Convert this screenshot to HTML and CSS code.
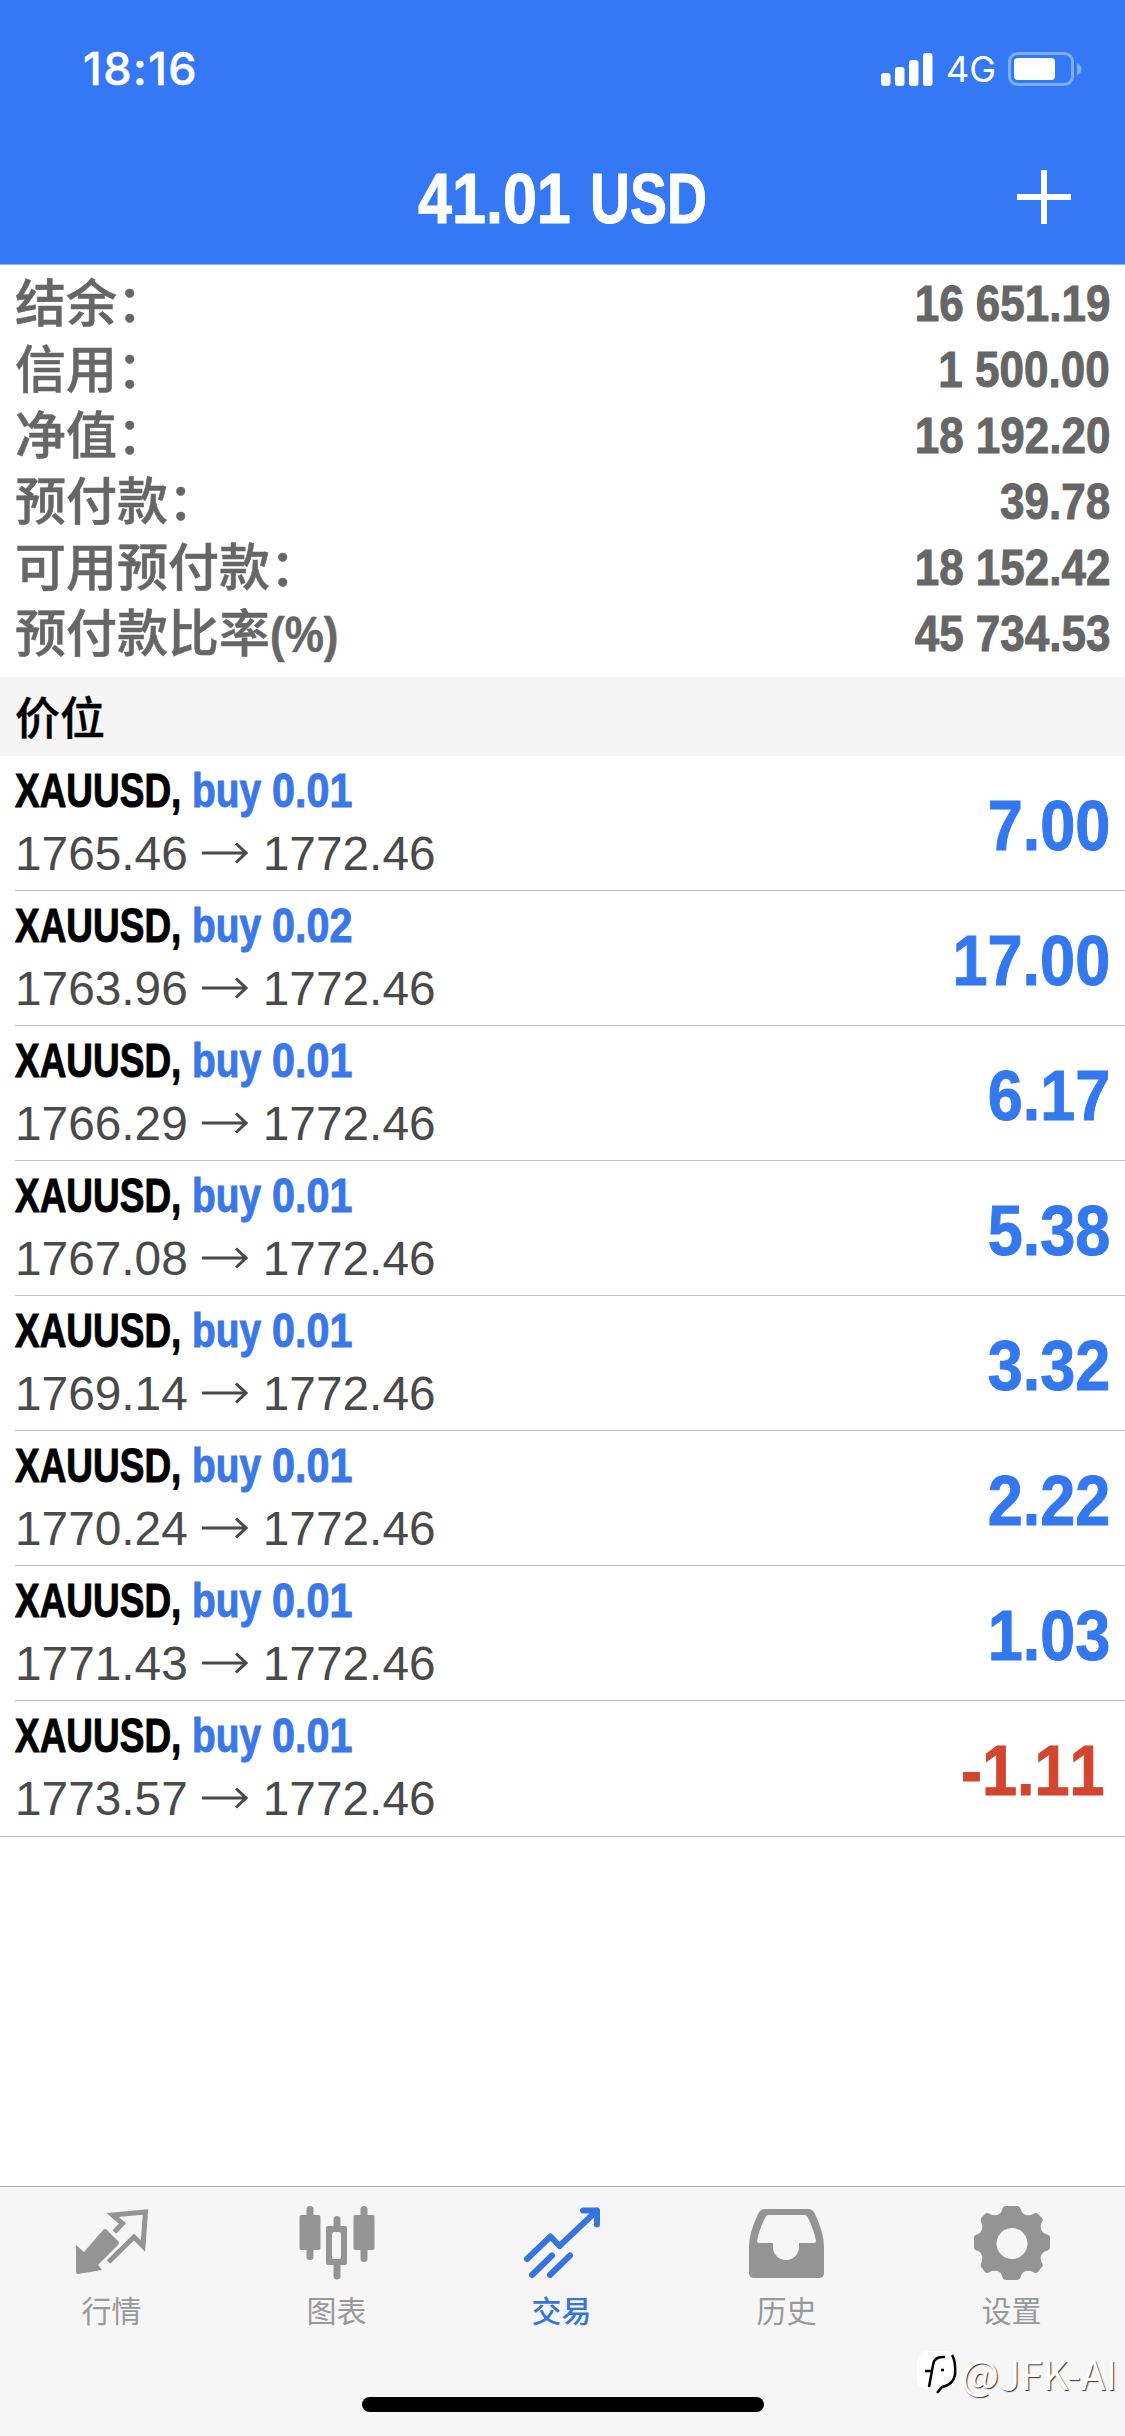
FILE: index.html
```html
<!DOCTYPE html>
<html lang="zh-CN">
<head>
<meta charset="utf-8">
<title>交易</title>
<link rel="stylesheet" href="styles.css">
</head>
<body>
<div class="app">
  <header class="header">
    <div class="status">
      <span class="clock">18:16</span>
      <div class="status-icons">
        <svg class="signal" viewBox="0 0 52 33"><rect x="0" y="20" width="9.500" height="13" rx="3"/><rect x="14" y="14" width="9.500" height="19" rx="3"/><rect x="28" y="7" width="9.500" height="26" rx="3"/><rect x="42" y="0" width="9.500" height="33" rx="3"/></svg>
        <span class="network">4G</span>
        <svg class="battery" viewBox="0 0 74 34"><rect class="shell" x="1.500" y="1.500" width="63" height="31" rx="8"/><rect x="6" y="6" width="41" height="22" rx="4"/><path class="nub" d="M69 11q4.500 1.500 4.500 6t-4.500 6z"/></svg>
      </div>
    </div>
    <div class="nav">
      <h1 class="nav-title"><span class="nav-amount">41.01</span><span class="nav-currency">USD</span></h1>
      <svg class="plus" viewBox="0 0 54 54"><path d="M27 0v54M0 27h54"/></svg>
    </div>
  </header>
  <section class="summary">
    <div class="sum-row"><span>结余：</span><b class="num">16 651.19</b></div>
    <div class="sum-row"><span>信用：</span><b class="num">1 500.00</b></div>
    <div class="sum-row"><span>净值：</span><b class="num">18 192.20</b></div>
    <div class="sum-row"><span>预付款：</span><b class="num">39.78</b></div>
    <div class="sum-row"><span>可用预付款：</span><b class="num">18 152.42</b></div>
    <div class="sum-row"><span>预付款比率<b class="pct">(%)</b></span><b class="num">45 734.53</b></div>
  </section>
  <h2 class="section-title">价位</h2>
  <ul class="positions">
    <li class="position"><div class="info"><div class="deal"><b class="symbol">XAUUSD,</b><b class="side">buy</b><b class="lots">0.01</b></div><div class="prices"><span>1765.46</span><svg class="arrow" viewBox="0 0 46 22"><path d="M0 11h44M34 1.500l10 9.500-10 9.500"/></svg><span>1772.46</span></div></div><b class="profit">7.00</b></li>
    <li class="position"><div class="info"><div class="deal"><b class="symbol">XAUUSD,</b><b class="side">buy</b><b class="lots">0.02</b></div><div class="prices"><span>1763.96</span><svg class="arrow" viewBox="0 0 46 22"><path d="M0 11h44M34 1.500l10 9.500-10 9.500"/></svg><span>1772.46</span></div></div><b class="profit">17.00</b></li>
    <li class="position"><div class="info"><div class="deal"><b class="symbol">XAUUSD,</b><b class="side">buy</b><b class="lots">0.01</b></div><div class="prices"><span>1766.29</span><svg class="arrow" viewBox="0 0 46 22"><path d="M0 11h44M34 1.500l10 9.500-10 9.500"/></svg><span>1772.46</span></div></div><b class="profit">6.17</b></li>
    <li class="position"><div class="info"><div class="deal"><b class="symbol">XAUUSD,</b><b class="side">buy</b><b class="lots">0.01</b></div><div class="prices"><span>1767.08</span><svg class="arrow" viewBox="0 0 46 22"><path d="M0 11h44M34 1.500l10 9.500-10 9.500"/></svg><span>1772.46</span></div></div><b class="profit">5.38</b></li>
    <li class="position"><div class="info"><div class="deal"><b class="symbol">XAUUSD,</b><b class="side">buy</b><b class="lots">0.01</b></div><div class="prices"><span>1769.14</span><svg class="arrow" viewBox="0 0 46 22"><path d="M0 11h44M34 1.500l10 9.500-10 9.500"/></svg><span>1772.46</span></div></div><b class="profit">3.32</b></li>
    <li class="position"><div class="info"><div class="deal"><b class="symbol">XAUUSD,</b><b class="side">buy</b><b class="lots">0.01</b></div><div class="prices"><span>1770.24</span><svg class="arrow" viewBox="0 0 46 22"><path d="M0 11h44M34 1.500l10 9.500-10 9.500"/></svg><span>1772.46</span></div></div><b class="profit">2.22</b></li>
    <li class="position"><div class="info"><div class="deal"><b class="symbol">XAUUSD,</b><b class="side">buy</b><b class="lots">0.01</b></div><div class="prices"><span>1771.43</span><svg class="arrow" viewBox="0 0 46 22"><path d="M0 11h44M34 1.500l10 9.500-10 9.500"/></svg><span>1772.46</span></div></div><b class="profit">1.03</b></li>
    <li class="position"><div class="info"><div class="deal"><b class="symbol">XAUUSD,</b><b class="side">buy</b><b class="lots">0.01</b></div><div class="prices"><span>1773.57</span><svg class="arrow" viewBox="0 0 46 22"><path d="M0 11h44M34 1.500l10 9.500-10 9.500"/></svg><span>1772.46</span></div></div><b class="profit loss">-1.11</b></li>
  </ul>
  <footer class="tabbar">
    <nav class="tabs">
      <a class="tab"><svg class="tab-icon" viewBox="0 0 76 76"><path class="fill" d="M2 40l8 7 19-22q2-2 4 0l11 11q2 2 0 4L24 60l4 5-24 4q-2 0-2-2z"/><path class="line" d="M40.500 27l8-8.500-10-8.500 33-3-2.500 34-9-9L34.500 57"/></svg><span>行情</span></a>
      <a class="tab"><svg class="tab-icon" viewBox="0 0 76 76"><rect class="fill" x="0.500" y="10" width="21" height="35" rx="2"/><rect class="fill" x="7.500" y="1" width="7" height="54" rx="3.500"/><rect class="fill" x="54.500" y="10" width="21" height="35" rx="2"/><rect class="fill" x="61.500" y="1" width="7" height="56" rx="3.500"/><path class="fill" fill-rule="evenodd" d="M34.500 14.500a3.500 3.500 0 0 1 7 0V21H46q2 0 2 2v35q0 2-2 2h-4.500v11a3.500 3.500 0 0 1-7 0V60H29q-2 0-2-2V23q0-2 2-2h5.500zM35 27q-2 0-2 2v23q0 2 2 2h5q2 0 2-2V29q0-2-2-2z"/></svg><span>图表</span></a>
      <a class="tab active"><svg class="tab-icon" viewBox="0 0 76 76"><path class="trend" d="M3 54L26.500 31.500 35.500 41 73 5.500M59 5.500h14v14"/><path class="trend" d="M8 70l20-19.500M26 70l20-19.500"/></svg><span>交易</span></a>
      <a class="tab"><svg class="tab-icon" viewBox="0 0 76 76"><path class="fill" fill-rule="evenodd" d="M17 4h42q5 0 7 5 9 19 9 33v26q0 5-5 5H5q-5 0-5-5V42Q0 28 9 9q2-5 8-5zM20 10q-3 0-4 3Q10 25 8 36q0 2 2 2h14v4a13 13 0 0 0 26 0v-4h15q2 0 2-2-2-11-8-23-1-3-4-3z"/></svg><span>历史</span></a>
      <a class="tab"><svg class="tab-icon" viewBox="0 0 76 76"><path class="fill" fill-rule="evenodd" d="M32 1h11q3 0 4 4 1 4 5 5 4 1 7-1 3-2 5 0l3 3q3 2 1 5-2 3-1 7 1 4 5 5 4 1 4 4v9q0 3-4 4-4 1-5 5-1 4 1 7 2 3-1 5l-3 4q-2 2-5 0-3-2-7-1-4 1-5 5-1 4-4 4H32q-3 0-4-4-1-4-5-5-4-1-7 1-3 2-5 0l-3-4q-2-2-1-5 2-3 1-7-1-4-4-5-4-1-4-4v-9q0-3 4-4 3-1 4-5 1-4-1-7-1-3 1-5l3-3q2-2 5 0 3 2 7 1 4-1 5-5 1-4 4-4zM38 23a15.500 15.500 0 1 0 .01 0z"/></svg><span>设置</span></a>
    </nav>
    <div class="home"></div>
    <div class="watermark"><svg viewBox="0 0 42 46"><path class="bubble" d="M12 1h16q12 0 12 12v14q0 9-10 12H10Q1 38 1 28V12Q2 1 12 1z"/><path class="ink" d="M29 7q-11-1-12 8l-4 22M9 21h7M25 20h3"/><path class="ink" d="M36 5q4 6 3 20-2 10-13 12l-5 6"/></svg><span>@JFK-AI</span></div>
  </footer>
</div>
</body>
</html>
```
FILE: styles.css
```css
* { box-sizing: border-box; margin: 0; padding: 0; }
body { width: 1125px; background: #fff; }
svg { display: block; flex: none; }

.app {
  display: flex;
  flex-direction: column;
  width: 1125px;
  height: 2436px;
  overflow: hidden;
  font-family: "Liberation Sans", "Noto Sans CJK SC", sans-serif;
  font-kerning: none;
}

.header { height: 265px; background: #3478f5; border-bottom: 1px solid #8db4fa; color: #fff; }
.status { display: flex; justify-content: space-between; align-items: center; height: 138px; padding: 0 43px 0 83px; }
.clock { font: 500 45px/50px Inter, sans-serif; letter-spacing: 1.5px; -webkit-text-stroke: .5px; }
.status-icons { display: flex; align-items: center; }
.signal { width: 52px; height: 33px; fill: #fff; }
.network { width: 75px; padding-left: 13px; font: 400 36px/40px Inter, sans-serif; }
.battery { width: 74px; height: 34px; fill: #fff; }
.battery .shell { fill: none; stroke: #7baefb; stroke-width: 3; }
.battery .nub { fill: #7baefb; }
.nav { display: grid; grid-template-columns: 1fr auto 1fr; align-items: center; height: 118px; padding-right: 54px; padding-left: 54px; }
.nav-title { display: flex; grid-column: 2; width: 290px; padding-top: 4px; font-size: 71px; line-height: 80px; white-space: nowrap; -webkit-text-stroke: 1px; }
.nav-amount { width: 172px; transform: scaleX(.86); transform-origin: left; }
.nav-currency { width: 118px; transform: scaleX(.78); transform-origin: left; }
.plus { justify-self: end; width: 54px; height: 54px; stroke: #fff; stroke-width: 6; }

.summary { height: 412px; padding: 6px 15px 0; color: #666; }
.sum-row { display: flex; justify-content: space-between; align-items: center; height: 66px; font-size: 51px; font-weight: 500; line-height: 66px; white-space: nowrap; }
.sum-row > span { margin-top: 2px; -webkit-text-stroke: .5px; }
.num { font-size: 50px; transform: scaleX(.88); transform-origin: right; -webkit-text-stroke: 1px; }
.pct { display: inline-block; font-size: 50px; transform: scaleX(.88); transform-origin: left; }

.section-title { height: 79px; padding-left: 15px; background: #f5f5f5; color: #000; font: 500 45px/77px "Noto Sans CJK SC", sans-serif; -webkit-text-stroke: .4px; }

.positions { flex: 1; list-style: none; }
.position { display: flex; justify-content: space-between; height: 135px; margin-left: 15px; padding-right: 15px; border-bottom: 1px solid #bdbdbd; }
.position:last-child { height: 136px; margin-left: 0; padding-left: 15px; }
.info { padding-top: 7px; }
.deal { display: flex; font-size: 48px; line-height: 56px; white-space: nowrap; -webkit-text-stroke: 1px; }
.symbol { width: 177px; transform: scaleX(.77); transform-origin: left; }
.side { width: 80px; color: #3b78e7; transform: scaleX(.81); transform-origin: left; }
.lots { width: 85px; color: #3b78e7; transform: scaleX(.86); transform-origin: left; }
.prices { display: flex; align-items: center; height: 68px; font-size: 47.800px; color: #4a4a4a; }
.arrow { width: 46px; height: 22px; margin: 0 15px 0 14px; fill: none; stroke: #4a4a4a; stroke-width: 3; }
.profit { font-size: 70px; line-height: 140px; color: #3478f0; transform: scaleX(.9); transform-origin: right; -webkit-text-stroke: 1px; }
.loss { margin-right: 5px; color: #d2452f; }

.tabbar { position: relative; height: 250px; border-top: 1px solid #aaa; background: #f6f6f6; }
.tabs { display: grid; grid-template-columns: repeat(5, 1fr); margin-left: -1px; margin-right: 1px; }
.tab { display: flex; flex-direction: column; align-items: center; padding-top: 18px; color: #999; font: 400 30px/40px "Noto Sans CJK SC", sans-serif; }
.tab span { margin-top: 8px; }
.tab-icon { width: 76px; height: 76px; }
.fill { fill: #949494; }
.line { fill: none; stroke: #949494; stroke-width: 5; }
.trend { fill: none; stroke: #3674e0; stroke-width: 6; stroke-linecap: round; stroke-linejoin: round; }
.active { color: #3674d6; font-weight: 500; }
.home { width: 402px; height: 15px; margin: 68px auto 0; border-radius: 8px; background: #000; }
.watermark { position: absolute; top: 161px; right: 8px; display: flex; align-items: center; gap: 3px; color: #fff; font: 400 40px/50px "Noto Sans CJK SC", sans-serif; text-shadow: 1px 1px 1px #333; }
.watermark svg { width: 42px; height: 46px; }
.bubble { fill: #fff; }
.ink { fill: none; stroke: #000; stroke-width: 2.500; }
```
